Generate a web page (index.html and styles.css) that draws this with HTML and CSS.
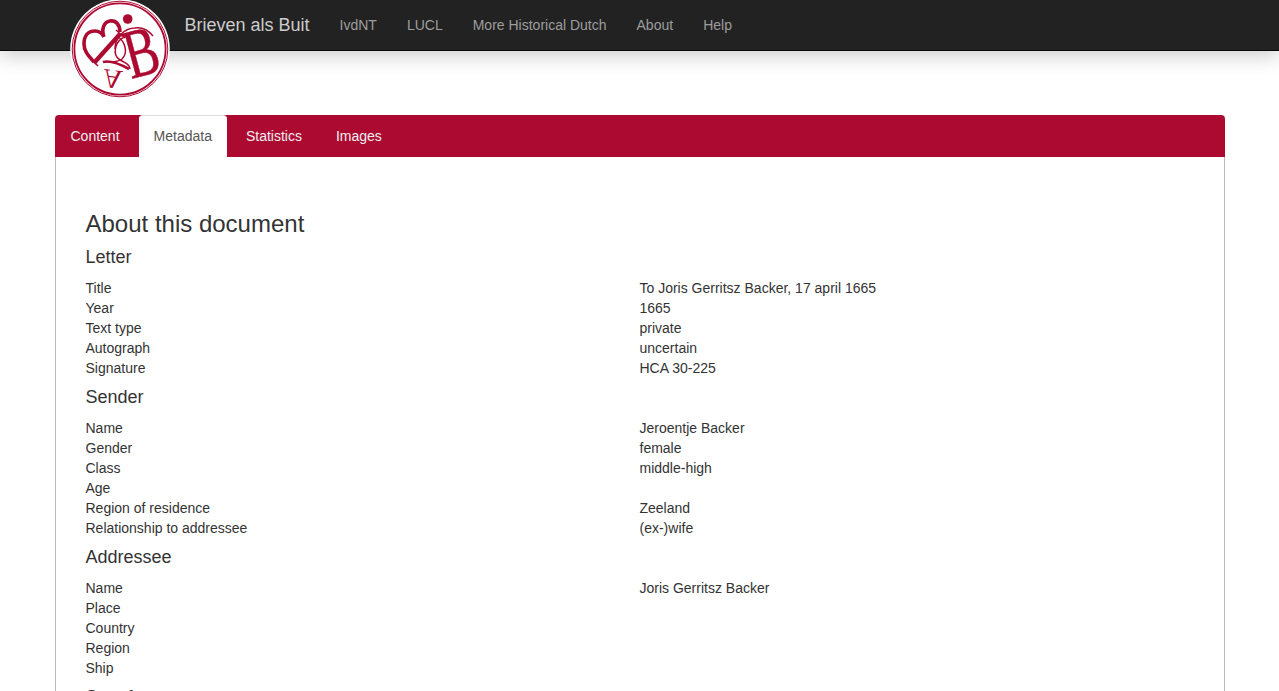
FILE: index.html
```html
<!DOCTYPE html>
<html lang="en">
<head>
<meta charset="utf-8">
<title>Brieven als Buit</title>
<link rel="stylesheet" href="styles.css">
</head>
<body>
<nav class="navbar">
  <div class="nav-inner">
    <a class="logo" href="#" aria-label="Brieven als Buit logo">
      <svg viewBox="0 0 100 100" width="100" height="100">
        <circle cx="50" cy="50" r="49.8" fill="#fff"/>
        <circle cx="50" cy="50" r="47.8" fill="none" stroke="#ad0a32" stroke-width="1"/>
        <circle cx="50" cy="50" r="45.6" fill="none" stroke="#ad0a32" stroke-width="1.8"/>
        <circle cx="57.7" cy="20" r="4.8" fill="#ad0a32"/>
        <path class="logo-heart" d="M24 63 C18 56 14 52 14 45 C14 37 18 32 25 32 C29 32 32 34 34 38 C31 30 34 23 40 22 C46 21 50 26 50 33"/>
        <path class="logo-stem" d="M24 64 L50 35"/>
        <path class="logo-line" d="M18 57 L28 67 M46 31 L55 39"/>
        <text class="logo-b" transform="translate(61 80) rotate(-15) scale(.72 1)">B</text>
        <text class="logo-a" transform="translate(34 70) rotate(7) scale(1 -1)">A</text>
        <path class="logo-line" d="M45 50 C45 38 55 29 65 29 C72 28 78 31 83 37"/>
        <path class="logo-line" d="M57 37 C44 41 42 56 50 61 C56 64 60 66 60 70"/>
        <path class="logo-line" d="M47 37 C56 43 58 54 52 60 C46 65 36 62 33 63"/>
        <path class="logo-swoosh" d="M33 63 C40 61 50 65 59 70"/>
      </svg>
    </a>
    <a class="brand" href="#">Brieven als Buit</a>
    <ul class="nav-links">
      <li><a href="#">IvdNT</a></li>
      <li><a href="#">LUCL</a></li>
      <li><a href="#">More Historical Dutch</a></li>
      <li><a href="#">About</a></li>
      <li><a href="#">Help</a></li>
    </ul>
  </div>
</nav>
<main class="container">
  <ul class="tabs">
    <li><a href="#">Content</a></li>
    <li class="active"><a href="#">Metadata</a></li>
    <li><a href="#">Statistics</a></li>
    <li><a href="#">Images</a></li>
  </ul>
  <div class="panel">
    <h2>About this document</h2>
    <section class="doc-section">
      <h3>Letter</h3>
      <div class="row"><span>Title</span><span>To Joris Gerritsz Backer, 17 april 1665</span></div>
      <div class="row"><span>Year</span><span>1665</span></div>
      <div class="row"><span>Text type</span><span>private</span></div>
      <div class="row"><span>Autograph</span><span>uncertain</span></div>
      <div class="row"><span>Signature</span><span>HCA 30-225</span></div>
    </section>
    <section class="doc-section">
      <h3>Sender</h3>
      <div class="row"><span>Name</span><span>Jeroentje Backer</span></div>
      <div class="row"><span>Gender</span><span>female</span></div>
      <div class="row"><span>Class</span><span>middle-high</span></div>
      <div class="row"><span>Age</span><span></span></div>
      <div class="row"><span>Region of residence</span><span>Zeeland</span></div>
      <div class="row"><span>Relationship to addressee</span><span>(ex-)wife</span></div>
    </section>
    <section class="doc-section">
      <h3>Addressee</h3>
      <div class="row"><span>Name</span><span>Joris Gerritsz Backer</span></div>
      <div class="row"><span>Place</span><span></span></div>
      <div class="row"><span>Country</span><span></span></div>
      <div class="row"><span>Region</span><span></span></div>
      <div class="row"><span>Ship</span><span></span></div>
    </section>
    <section class="doc-section">
      <h3>Sent from</h3>
    </section>
  </div>
</main>
</body>
</html>
```
FILE: styles.css
```css
* { box-sizing: border-box; }
html, body { margin: 0; padding: 0; }
html { overflow: hidden; }
body {
  font-family: "Liberation Sans", Arial, sans-serif;
  font-size: 14px;
  line-height: 20px;
  color: #333;
  background: #fff;
}
a { text-decoration: none; }
ul { list-style: none; margin: 0; padding: 0; }

.navbar {
  height: 51px;
  background: #222;
  border-bottom: 1px solid #080808;
  box-shadow: 0 5px 20px rgba(0, 0, 0, .2);
}
.nav-inner {
  width: 1170px;
  margin: 0 auto;
  display: flex;
  position: relative;
  padding-left: 115px;
}
.logo {
  position: absolute;
  left: 15px;
  top: -1px;
  display: block;
  width: 100px;
  height: 100px;
  z-index: 2;
}
.logo svg { display: block; }
.logo-b { font: 400 70px "Liberation Serif", serif; fill: #ad0a32; stroke: #ad0a32; stroke-width: .5; }
.logo-a { font: 400 27px "Liberation Serif", serif; fill: #ad0a32; }
.logo-line { fill: none; stroke: #ad0a32; stroke-width: 1.5; }
.logo-swoosh { fill: none; stroke: #ad0a32; stroke-width: 2.6; }
.logo-heart { fill: none; stroke: #ad0a32; stroke-width: 3.6; }
.logo-stem { fill: none; stroke: #ad0a32; stroke-width: 4.4; }
.brand {
  padding: 15px;
  font-size: 18px;
  color: #ccc;
  white-space: nowrap;
}
.nav-links { display: flex; }
.nav-links a {
  display: block;
  padding: 15px;
  color: #9d9d9d;
}

.container {
  width: 1170px;
  margin: 64px auto 0;
}
.tabs {
  display: flex;
  background: #ad0a32;
  border-radius: 4px 4px 0 0;
  height: 42px;
}
.tabs li { margin-right: 2px; }
.tabs a {
  display: block;
  height: 42px;
  padding: 11px 16px;
  color: #eee;
  border-radius: 4px 4px 0 0;
}
.tabs .active { margin: 0 3px 0 1px; }
.tabs .active a {
  background: #fff;
  color: #555;
  border: 1px solid #fff;
  border-top-color: #ddd;
  padding: 10px 14px 11px;
}
.panel {
  border: 1px solid #bbb;
  border-top: 0;
  padding: 54px 30px 30px;
}
h2 {
  margin: 0 0 10px;
  font-size: 24px;
  font-weight: 400;
  line-height: 26px;
}
h3 {
  margin: 0 0 11px;
  font-size: 18px;
  font-weight: 400;
  line-height: 20px;
}
.doc-section + .doc-section { padding-top: 9px; }
.row { display: grid; grid-template-columns: 1fr 1fr; }
```
